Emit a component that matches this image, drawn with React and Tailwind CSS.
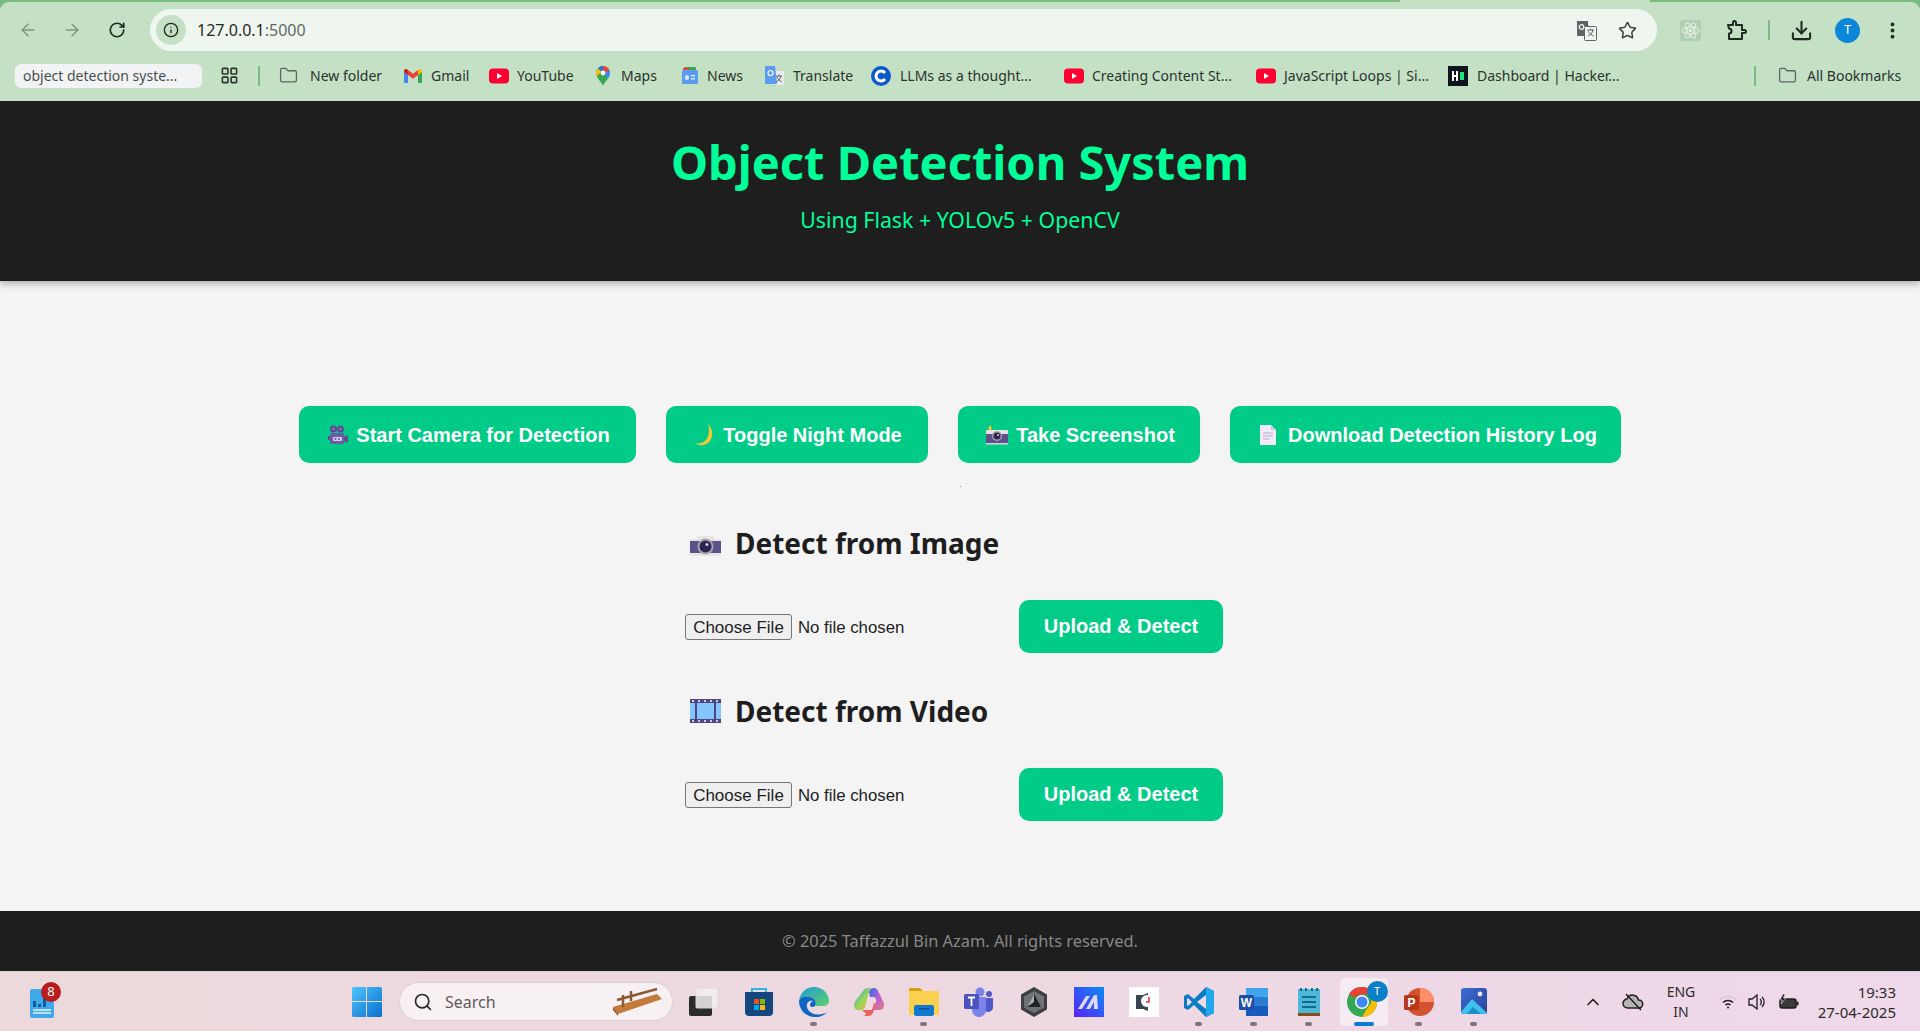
import React from 'react';
import { ArrowLeft, ArrowRight, RotateCw, Info, Star, Download, MoreVertical, ChevronUp, Search, Folder, LayoutGrid } from 'lucide-react';

/* ---------- bookmark favicons ---------- */
const YouTubeIcon = () => (
  <svg width="20" height="16" viewBox="0 0 20 16">
    <rect width="20" height="15" y="0.5" rx="4" fill="#ff0033" />
    <path d="M8 5l5 3-5 3z" fill="#fff" />
  </svg>
);

const GmailIcon = () => (
  <svg width="18" height="16" viewBox="0 0 18 16">
    <path d="M0 3v11a1 1 0 0 0 1 1h3V6.500z" fill="#4285f4" />
    <path d="M18 3v11a1 1 0 0 1-1 1h-3V6.500z" fill="#34a853" />
    <path d="M14 2v5l4-3V3c0-1.800-2-2.500-3-1.500z" fill="#fbbc04" />
    <path d="M4 7V2l5 3.800L14 2v5l-5 3.800z" fill="#ea4335" />
    <path d="M0 3v1l4 3V2L3 1.500C2 .5 0 1.200 0 3z" fill="#c5221f" />
  </svg>
);

const MapsIcon = () => (
  <svg width="14" height="20" viewBox="0 0 14 20">
    <path d="M7 20C6 16 0 12 0 7a7 7 0 0 1 14 0c0 5-6 9-7 13z" fill="#34a853" />
    <path d="M2 2.200A7 7 0 0 1 7 0v4.500A2.500 2.500 0 0 0 5 5.500z" fill="#1a73e8" />
    <path d="M7 0a7 7 0 0 1 6.500 4.500L9 6.500A2.500 2.500 0 0 0 7 4.500z" fill="#ea4335" />
    <path d="M0 7a7 7 0 0 1 2-4.800l3.200 3.500L1 10.500A7 7 0 0 1 0 7z" fill="#fbbc04" />
    <path d="M13.500 4.500A7 7 0 0 1 14 7c0 2-1 3.800-2.500 6L9 6.500z" fill="#4285f4" />
    <circle cx="7" cy="7" r="2.400" fill="#fff" />
  </svg>
);

const NewsIcon = () => (
  <svg width="16" height="18" viewBox="0 0 16 18">
    <rect x="2" y="0" width="12" height="6" rx="1" fill="#34a853" />
    <rect x="1" y="1" width="6" height="5" fill="#ea4335" />
    <rect x="0" y="3" width="16" height="14" rx="1.500" fill="#5c9cf0" />
    <rect x="3" y="8" width="4" height="5" rx="2" fill="#d6e6fb" />
    <rect x="9" y="8" width="4" height="1.500" fill="#d6e6fb" />
    <rect x="9" y="11" width="4" height="1.500" fill="#d6e6fb" />
  </svg>
);

const TranslateIcon = () => (
  <svg width="19" height="20" viewBox="0 0 19 20">
    <rect x="7" y="5" width="12" height="14" rx="1" fill="#e8eaed" />
    <path d="M10 19l-1 1-1-1z" fill="#4285f4" />
    <path d="M1 0h9l2 18H1a1 1 0 0 1-1-1V1a1 1 0 0 1 1-1z" fill="#5c9cf0" />
    <circle cx="5.500" cy="7" r="2.500" fill="none" stroke="#fff" strokeWidth="1.200" />
    <path d="M11 10h6M14 8.500v1.500M16 10c-.5 3-3 5-5 6M12 11c1 2.500 3 4 5 5" stroke="#5f6368" strokeWidth="1" fill="none" />
  </svg>
);

const CircleCIcon = () => (
  <svg width="20" height="20" viewBox="0 0 20 20">
    <circle cx="10" cy="10" r="10" fill="#0a58ca" />
    <path d="M14 7a5 5 0 1 0 0 6" fill="none" stroke="#fff" strokeWidth="3" />
  </svg>
);

const HackerIcon = () => (
  <svg width="20" height="20" viewBox="0 0 20 20">
    <rect width="20" height="20" fill="#0e141e" />
    <path d="M4 5h2v4h2V5h2v10H8v-4H6v4H4z" fill="#fff" />
    <rect x="12" y="6" width="4" height="8" fill="#1ce57a" />
  </svg>
);

const bookmarks = [
  { label: 'New folder', width: 'w-[125px]', icon: <Folder size={19} strokeWidth={1.6} color="#5f6368" />, gap: 'gap-[12px]' },
  { label: 'Gmail', width: 'w-[85px]', icon: <GmailIcon />, gap: 'gap-[9px]' },
  { label: 'YouTube', width: 'w-[107px]', icon: <YouTubeIcon />, gap: 'gap-[8px]' },
  { label: 'Maps', width: 'w-[86px]', icon: <MapsIcon />, gap: 'gap-[11px]' },
  { label: 'News', width: 'w-[83px]', icon: <NewsIcon />, gap: 'gap-[9px]' },
  { label: 'Translate', width: 'w-[106px]', icon: <TranslateIcon />, gap: 'gap-[9px]' },
  { label: 'LLMs as a thought...', width: 'w-[193px]', icon: <CircleCIcon />, gap: 'gap-[9px]' },
  { label: 'Creating Content St...', width: 'w-[192px]', icon: <YouTubeIcon />, gap: 'gap-[8px]' },
  { label: 'JavaScript Loops | Si...', width: 'w-[192px]', icon: <YouTubeIcon />, gap: 'gap-[8px]' },
  { label: 'Dashboard | Hacker...', width: 'w-[306px]', icon: <HackerIcon />, gap: 'gap-[9px]' },
];

/* ---------- chrome toolbar ---------- */
const BrowserChrome = () => (
  <div className="bg-[#7bbd80] shrink-0 relative z-20">
    <div className="flex h-[2px]">
      <div className="flex-1" />
      <div className="w-[250px] bg-[#c5e1c5]" />
      <div className="w-[270px]" />
    </div>
    <div className="bg-[#c5e1c5] rounded-t-[9px] h-[99px] flex flex-col">
      <div className="flex items-center h-[56px]">
        <div className="w-[150px] flex items-center shrink-0 pl-[18px] gap-[24px]">
          <ArrowLeft size={20} strokeWidth={1.8} color="#7f9484" />
          <ArrowRight size={20} strokeWidth={1.8} color="#7f9484" />
          <RotateCw size={18} strokeWidth={2.2} color="#1f2a22" className="ml-[2px]" />
        </div>
        <div className="w-[1507px] h-[42px] rounded-full bg-[#eff6ef] flex items-center pl-[6px] pr-[20px]">
          <div className="w-[30px] h-[30px] rounded-full bg-[#c5e1c5] flex items-center justify-center">
            <Info size={16} strokeWidth={2} color="#1f2a22" />
          </div>
          <span className="ml-[11px] text-[16px] text-[#1f2a22]">127.0.0.1<span className="text-[#5f6b62]">:5000</span></span>
          <div className="ml-auto flex items-center gap-[21px]">
            <svg width="21" height="21" viewBox="0 0 21 21">
              <path d="M1 1h11l1 15H2a1 1 0 0 1-1-1z" fill="#5f6368" />
              <rect x="8.500" y="6.500" width="12" height="14" rx="1" fill="#eff6ef" stroke="#5f6368" />
              <path d="M11 10h7M14.500 8.500V10M17 10c-.5 3-3 5-5 6M12.500 11.500c1 2 3 3.500 5 4.500" stroke="#5f6368" fill="none" />
              <circle cx="5.500" cy="7" r="2.300" fill="none" stroke="#eff6ef" strokeWidth="1.300" />
            </svg>
            <Star size={19} strokeWidth={1.9} color="#3c4043" />
          </div>
        </div>
        <div className="flex items-center flex-1 pl-[23px]">
          <svg width="21" height="21" viewBox="0 0 21 21">
            <rect width="21" height="21" rx="2" fill="#b0ceb2" />
            <g fill="none" stroke="#e3efe3" strokeWidth="1.100">
              <ellipse cx="10.500" cy="10.500" rx="8.500" ry="3.400" />
              <ellipse cx="10.500" cy="10.500" rx="8.500" ry="3.400" transform="rotate(60 10.500 10.500)" />
              <ellipse cx="10.500" cy="10.500" rx="8.500" ry="3.400" transform="rotate(120 10.500 10.500)" />
            </g>
            <circle cx="10.500" cy="10.500" r="1.800" fill="#e3efe3" />
          </svg>
          <svg width="22" height="20" viewBox="0 0 22 20" className="ml-[25px]" fill="none" stroke="#1f2a22" strokeWidth="2" strokeLinejoin="round">
            <path d="M2 5h5V2.500a1.500 1.500 0 0 1 3 0V5h6v5h2.500a1.500 1.500 0 0 1 0 3H16v6H3v-5.500a2.500 2.500 0 0 0 0-5z" fill="none" />
          </svg>
          <div className="w-[2px] h-[20px] bg-[#7bbd80] ml-[20px]" />
          <Download size={23} strokeWidth={2.2} color="#1f2a22" className="ml-[20px]" />
          <div className="w-[25px] h-[25px] rounded-full bg-[#0b86d9] text-white text-[13px] flex items-center justify-center ml-[22px]">T</div>
          <MoreVertical size={21} strokeWidth={2.4} color="#1f2a22" className="ml-[22px]" />
        </div>
      </div>
      <div className="flex items-center h-[43px] text-[14px] text-[#2b332d] pb-[8px]">
        <div className="ml-[15px] w-[187px] h-[24px] rounded-[6px] bg-[#f1f3f4] text-[#4a4f4c] flex items-center pl-[8px]">object detection syste...</div>
        <LayoutGrid size={19} strokeWidth={2} color="#2b332d" className="ml-[18px] shrink-0" />
        <div className="w-[2px] h-[20px] bg-[#7bbd80] ml-[19px] mr-[19px] shrink-0" />
        {bookmarks.map((b) => (
          <div key={b.label} className={`flex items-center shrink-0 whitespace-nowrap ${b.width} ${b.gap}`}>
            {b.icon}
            <span>{b.label}</span>
          </div>
        ))}
        <div className="w-[2px] h-[20px] bg-[#7bbd80] shrink-0" />
        <Folder size={19} strokeWidth={1.6} color="#5f6368" className="ml-[22px] shrink-0" />
        <span className="ml-[10px] whitespace-nowrap">All Bookmarks</span>
      </div>
    </div>
  </div>
);

/* ---------- emoji drawings ---------- */
const MovieCamera = () => (
  <svg width="20" height="20" viewBox="0 0 20 20">
    <circle cx="5.500" cy="4" r="3.500" fill="#5d4f92" />
    <circle cx="12.500" cy="4" r="3.500" fill="#5d4f92" />
    <circle cx="5.500" cy="4" r="1" fill="#9b8fcb" />
    <circle cx="12.500" cy="4" r="1" fill="#9b8fcb" />
    <rect x="2" y="8" width="14" height="11" rx="1" fill="#6b5ca8" />
    <path d="M16 12l4-2v8l-4-2z" fill="#5d4f92" />
    <rect x="0" y="11" width="2" height="4" fill="#5d4f92" />
    <rect x="5" y="12" width="9" height="4" rx="1" fill="#d5cfe8" />
    <circle cx="7.500" cy="14" r="1" fill="#5d4f92" />
    <circle cx="11" cy="14" r="1" fill="#5d4f92" />
  </svg>
);

const Moon = () => (
  <svg width="20" height="22" viewBox="0 0 20 22">
    <path d="M13 0c5 5 6 13 1 18-4 4-10 4-14 1 4 1 8 0 11-3 3-4 4-10 2-16z" fill="#f5c935" />
  </svg>
);

const CameraFlash = () => (
  <svg width="22" height="20" viewBox="0 0 22 20">
    <path d="M4 0l2 3-2 3-2-3z" fill="#f6c333" />
    <rect x="0" y="5" width="22" height="5" rx="1" fill="#e6e1e6" />
    <rect x="0" y="9" width="22" height="9" fill="#5d5189" />
    <rect x="0" y="18" width="22" height="1.500" fill="#d8d4dc" />
    <circle cx="11" cy="11" r="5" fill="#a8a4ac" />
    <circle cx="11" cy="11" r="3.600" fill="#2e2550" />
    <circle cx="12" cy="10" r="1" fill="#d6cff0" />
  </svg>
);

const PageIcon = () => (
  <svg width="16" height="20" viewBox="0 0 16 20" className="ml-[3px] mr-[4px]">
    <path d="M0 0h11l5 5v15H0z" fill="#f0ebf6" />
    <path d="M11 0l5 5h-5z" fill="#cfc7e0" />
    <path d="M3 8h10M3 11h10M3 14h7" stroke="#b5abc9" strokeWidth="1.200" />
  </svg>
);

const CameraEmoji = () => (
  <svg width="31" height="22" viewBox="0 0 31 22" className="mt-[6px]">
    <path d="M0 5a1 1 0 0 1 1-1h6V1h17v3h6a1 1 0 0 1 1 1v16H0z" fill="#e8e4e8" />
    <rect y="6" width="31" height="12" fill="#5d5189" />
    <circle cx="15.500" cy="11.500" r="8" fill="#a8a4ac" />
    <circle cx="15.500" cy="11.500" r="6" fill="#2e2550" />
    <circle cx="17" cy="9.500" r="1.500" fill="#d6cff0" />
  </svg>
);

const FilmEmoji = () => (
  <svg width="31" height="24" viewBox="0 0 31 24">
    <rect width="31" height="24" fill="#4e467e" />
    <g fill="#cfc9e6">
      <rect x="2" y="1" width="2" height="2" /><rect x="8" y="1" width="2" height="2" /><rect x="14" y="1" width="2" height="2" /><rect x="20" y="1" width="2" height="2" /><rect x="26" y="1" width="2" height="2" />
      <rect x="2" y="21" width="2" height="2" /><rect x="8" y="21" width="2" height="2" /><rect x="14" y="21" width="2" height="2" /><rect x="20" y="21" width="2" height="2" /><rect x="26" y="21" width="2" height="2" />
    </g>
    <rect x="0" y="4" width="31" height="16" fill="#84c5fd" />
    <rect x="5" y="4" width="2" height="16" fill="#4e467e" />
    <rect x="24" y="4" width="2" height="16" fill="#4e467e" />
  </svg>
);

const ActionButton = ({ icon, width, children }) => (
  <button className={`${width} h-[57px] rounded-[10px] bg-[#00cc88] text-white font-bold text-[20px] font-['Liberation_Sans',sans-serif] flex items-center justify-center gap-[8px] pl-[3px] pt-[1px] whitespace-nowrap`}>
    {icon}
    {children}
  </button>
);

const UploadSection = ({ icon, title }) => (
  <section>
    <h2 className="flex items-center h-[40px] pl-[5px] gap-[14px] text-[28px] font-bold text-[#1e1e1e] font-['Noto_Sans',sans-serif] leading-none">
      {icon}
      <span>{title}</span>
    </h2>
    <form className="flex items-center mt-[37px] h-[53px] font-['Liberation_Sans',sans-serif]">
      <input
        type="file"
        className="w-[334px] mt-[2px] text-[16.800px] text-[#1e1e1e] file:h-[26px] file:w-[107px] file:mr-[6px] file:border file:border-[#767676] file:bg-[#efefef] file:rounded-[3px] file:text-[17px]"
      />
      <button type="button" className="w-[204px] h-[53px] rounded-[10px] bg-[#00cc88] text-white font-bold text-[20px] pb-[2px]">Upload &amp; Detect</button>
    </form>
  </section>
);

/* ---------- windows taskbar icons ---------- */
const TaskView = () => (
  <svg width="30" height="30" viewBox="0 0 30 30">
    <rect x="0" y="9" width="23" height="20" rx="2" fill="#2b2b2b" />
    <rect x="7" y="1" width="22" height="20" rx="1" fill="#f3eef0" fillOpacity="0.85" stroke="#e0d8dc" />
  </svg>
);

const StoreIcon = () => (
  <svg width="30" height="30" viewBox="0 0 30 30">
    <path d="M8 5V2h14v3" fill="none" stroke="#2fb6d8" strokeWidth="2" />
    <path d="M1 5h28v20a4 4 0 0 1-4 4H5a4 4 0 0 1-4-4z" fill="#14477e" />
    <rect x="10" y="12" width="5" height="5" fill="#f25022" />
    <rect x="16" y="12" width="5" height="5" fill="#7fba00" />
    <rect x="10" y="18" width="5" height="5" fill="#00a4ef" />
    <rect x="16" y="18" width="5" height="5" fill="#ffb900" />
  </svg>
);

const EdgeIcon = () => (
  <svg width="30" height="30" viewBox="0 0 30 30">
    <defs>
      <linearGradient id="edgeTop" x1="0" y1="0" x2="1" y2="1">
        <stop offset="0" stopColor="#1f9ad6" />
        <stop offset="1" stopColor="#5ed36a" />
      </linearGradient>
    </defs>
    <path d="M0 14C1 6 7 0 15 0c8 0 15 6 15 14 0 3-2 5-6 5h-8c2-3 0-8-5-9-5-1-10 0-11 4z" fill="url(#edgeTop)" />
    <path d="M0 14c1-4 6-5 11-4 5 1 7 6 5 9-2 2-5 1-5-1 0-2 1-3 3-4-4-1-7 2-6 6 1 5 7 9 15 7 2 0 5-1 6-3-3 4-7 6-13 6C7 30 0 23 0 14z" fill="#0c66c2" />
  </svg>
);

const CopilotIcon = () => (
  <svg width="30" height="30" viewBox="0 0 30 30">
    <defs>
      <linearGradient id="copA" x1="0" y1="0" x2="1" y2="1">
        <stop offset="0" stopColor="#1fa8e8" />
        <stop offset="0.5" stopColor="#9ad45a" />
        <stop offset="1" stopColor="#f5b13c" />
      </linearGradient>
      <linearGradient id="copB" x1="0" y1="0" x2="1" y2="1">
        <stop offset="0" stopColor="#2b6ee0" />
        <stop offset="0.5" stopColor="#b05fd8" />
        <stop offset="1" stopColor="#f07a7a" />
      </linearGradient>
    </defs>
    <path d="M9 4c1-2 3-3 5-3h5c-2 0-3 2-4 4l-4 15c-1 2-2 3-4 3H4c-3 0-4-2-4-5 0-2 1-4 2-5z" fill="url(#copA)" />
    <path d="M15 5c1-3 3-4 5-4 2 0 3 1 4 3l5 10c1 2 1 3 1 5 0 2-2 4-5 4h-5l2-8c1-3-1-5-3-5h-3z" fill="url(#copB)" />
    <path d="M8 23h10l2-7h2l-3 10c-1 2-3 3-5 3h-5c2 0 3-2 3-3l-2-1z" fill="#f0605a" />
  </svg>
);

const ExplorerIcon = () => (
  <svg width="30" height="30" viewBox="0 0 30 30">
    <path d="M0 2a1 1 0 0 1 1-1h10l3 3h16v4H0z" fill="#d9a013" />
    <rect x="0" y="4" width="30" height="24" fill="#fbd04f" />
    <rect x="5" y="18" width="20" height="11" rx="2" fill="#0f78d0" />
    <rect x="10" y="21" width="10" height="1.500" fill="#0b4f90" />
  </svg>
);

const TeamsIcon = () => (
  <svg width="30" height="30" viewBox="0 0 30 30">
    <circle cx="16" cy="5" r="4.500" fill="#7b83eb" />
    <circle cx="25" cy="7" r="3" fill="#5059c9" />
    <path d="M20 11h9v9a5 5 0 0 1-9 3z" fill="#5059c9" />
    <path d="M8 10h14v13a6 6 0 0 1-14 0z" fill="#7b83eb" />
    <rect x="0" y="7" width="15" height="15" rx="1.500" fill="#4b53bc" />
    <path d="M4 10.500h7M7.500 10.500V19" stroke="#fff" strokeWidth="1.800" />
  </svg>
);

const HexIcon = () => (
  <svg width="28" height="30" viewBox="0 0 28 30">
    <path d="M14 0l13 7.500v15L14 30 1 22.500v-15z" fill="#3c3f44" />
    <path d="M14 4l10 5.500v11L14 26 4 20.500v-11z" fill="#6f7378" />
    <path d="M14 7l7 13H7z" fill="#1f2125" />
    <path d="M14 7l-7 13 7-5z" fill="#a9adb2" />
  </svg>
);

const MIcon = () => (
  <svg width="30" height="30" viewBox="0 0 30 30">
    <defs>
      <linearGradient id="mGrad" x1="0" y1="1" x2="1" y2="0">
        <stop offset="0" stopColor="#5a22f5" />
        <stop offset="1" stopColor="#0a8cf5" />
      </linearGradient>
    </defs>
    <rect width="30" height="30" fill="url(#mGrad)" />
    <path d="M4 22L12 9h4L8 22zM12 22l8-14h3l1 14h-4v-7l-4 7z" fill="#dcd8ff" />
  </svg>
);

const ClockIcon = () => (
  <svg width="30" height="30" viewBox="0 0 30 30">
    <rect width="30" height="30" fill="#fff" />
    <path d="M7 8h7l5-2v18l-5-2H7z" fill="#3b4552" />
    <circle cx="18" cy="14" r="6" fill="#fff" />
    <path d="M20 10v5h-3" stroke="#d6303a" strokeWidth="1.500" fill="none" />
  </svg>
);

const VSCodeIcon = () => (
  <svg width="30" height="30" viewBox="0 0 30 30">
    <path d="M22 0l8 4v22l-8 4-12-12-6 5-4-2v-12l4-2 6 5z" fill="#0a7bc4" />
    <path d="M22 0l8 4v22l-8 4z" fill="#22a6ee" />
    <path d="M22 8v14l-9-7z" fill="#eed9e6" />
    <path d="M4 11l4 4-4 4-1-1v-6z" fill="#eed9e6" />
  </svg>
);

const WordIcon = () => (
  <svg width="30" height="30" viewBox="0 0 30 30">
    <rect x="7" y="1" width="22" height="9" fill="#41a5ee" />
    <rect x="7" y="10" width="22" height="9" fill="#2b7cd3" />
    <rect x="7" y="19" width="22" height="10" fill="#185abd" />
    <rect x="0" y="8" width="15" height="15" rx="1.500" fill="#1e4fa8" />
    <text x="7.500" y="20" textAnchor="middle" fontSize="12" fontWeight="700" fill="#fff" fontFamily="Liberation Sans, sans-serif">W</text>
  </svg>
);

const NotepadIcon = () => (
  <svg width="22" height="30" viewBox="0 0 22 30">
    <rect x="0" y="2" width="22" height="24" fill="#4cb8d8" />
    <rect x="0" y="26" width="22" height="3" fill="#8a4a1c" />
    <path d="M3 1v3M8 1v3M14 1v3M19 1v3" stroke="#136d8e" strokeWidth="2" />
    <path d="M4 10h14M4 15h14M4 20h14" stroke="#0f6c8c" strokeWidth="2" />
  </svg>
);

const ChromeIcon = () => (
  <div className="relative w-[48px] h-[48px] rounded-[5px] bg-[#f6eaf3] flex items-center justify-center">
    <svg width="30" height="30" viewBox="0 0 30 30" className="mt-[1px] ml-[-3px]">
      <circle cx="15" cy="15" r="15" fill="#34a853" />
      <path d="M15 0a15 15 0 0 1 13 7.500H15A7.500 7.500 0 0 0 8 11L2 7A15 15 0 0 1 15 0z" fill="#ea4335" />
      <path d="M28 7.500A15 15 0 0 1 15 30l6-10a7.500 7.500 0 0 0 0-12.500z" fill="#fbbc04" />
      <circle cx="15" cy="15" r="7" fill="#fff" />
      <circle cx="15" cy="15" r="5.500" fill="#4285f4" />
    </svg>
    <div className="absolute top-[3px] right-[0px] w-[21px] h-[21px] rounded-full bg-[#0b7fc7] text-white text-[11px] flex items-center justify-center">T</div>
    <div className="absolute bottom-[0px] left-[14px] w-[20px] h-[4px] rounded-full bg-[#0a7bd4]" />
  </div>
);

const PowerPointIcon = () => (
  <svg width="30" height="30" viewBox="0 0 30 30">
    <circle cx="16" cy="15" r="14" fill="#d35230" />
    <path d="M16 1a14 14 0 0 1 14 14H16z" fill="#ff8f6b" />
    <rect x="0" y="8" width="15" height="15" rx="1.500" fill="#b7381b" />
    <text x="7.500" y="20" textAnchor="middle" fontSize="12" fontWeight="700" fill="#fff" fontFamily="Liberation Sans, sans-serif">P</text>
  </svg>
);

const PhotosIcon = () => (
  <svg width="26" height="28" viewBox="0 0 26 28">
    <defs>
      <linearGradient id="photoSky" x1="0" y1="0" x2="1" y2="1">
        <stop offset="0" stopColor="#3c6fd0" />
        <stop offset="1" stopColor="#2a3f9e" />
      </linearGradient>
    </defs>
    <rect width="26" height="26" rx="3" fill="url(#photoSky)" />
    <circle cx="19" cy="6" r="2.400" fill="#e8e4f6" />
    <path d="M0 24l11-13 15 14v1H2z" fill="#3cc2ec" />
    <path d="M6 26l6-7 8 7z" fill="#1e8cc8" />
  </svg>
);

const taskIcons = [
  { id: 'view', icon: <TaskView /> },
  { id: 'store', icon: <StoreIcon /> },
  { id: 'edge', icon: <EdgeIcon />, running: true },
  { id: 'copilot', icon: <CopilotIcon /> },
  { id: 'explorer', icon: <ExplorerIcon />, running: true },
  { id: 'teams', icon: <TeamsIcon /> },
  { id: 'hex', icon: <HexIcon /> },
  { id: 'm', icon: <MIcon /> },
  { id: 'clock', icon: <ClockIcon /> },
  { id: 'vscode', icon: <VSCodeIcon />, running: true },
  { id: 'word', icon: <WordIcon />, running: true },
  { id: 'notepad', icon: <NotepadIcon />, running: true },
  { id: 'chrome', icon: <ChromeIcon /> },
  { id: 'ppt', icon: <PowerPointIcon />, running: true },
  { id: 'photos', icon: <PhotosIcon />, running: true },
];

const Taskbar = () => (
  <div className="h-[60px] shrink-0 flex items-center border-t border-[#d8cdd2] bg-linear-to-r from-[#ecd9db] to-[#efd8e9] relative">
    <div className="relative ml-[30px] w-[24px] h-[29px] mt-[4px]">
      <svg width="24" height="29" viewBox="0 0 24 29">
        <rect width="24" height="29" rx="2" fill="#3fa9ec" />
        <path d="M3 18V12h3v6zM8 18v-3h3v3zM13 18V9h3v9z" fill="#0f5d9e" />
        <path d="M3 21h18M3 24h18" stroke="#e6f3fb" strokeWidth="1.500" />
      </svg>
      <div className="absolute top-[-7px] right-[-7px] w-[20px] h-[20px] rounded-full bg-[#b91c1c] text-white text-[13px] flex items-center justify-center">8</div>
    </div>
    <svg width="30" height="30" viewBox="0 0 30 30" className="ml-[298px]">
      <defs>
        <linearGradient id="winGrad" x1="0" y1="0" x2="1" y2="1">
          <stop offset="0" stopColor="#4fc3fa" />
          <stop offset="1" stopColor="#0a70cf" />
        </linearGradient>
      </defs>
      <rect width="30" height="30" rx="1.500" fill="url(#winGrad)" />
      <path d="M14.500 0v30M0 14.500h30" stroke="#ecdbe0" strokeWidth="1" />
    </svg>
    <div className="ml-[17px] w-[274px] h-[39px] rounded-full bg-[#f8f1f3] border border-[#dccfd4] flex items-center pl-[13px] text-[16px] text-[#5f5a5c] shrink-0">
      <Search size={20} strokeWidth={2} color="#2b2b2b" />
      <span className="ml-[12px]">Search</span>
      <svg width="52" height="30" viewBox="0 0 52 30" className="ml-auto mr-[9px]">
        <path d="M2 20l44-13 5 5-44 15z" fill="#c47a3a" />
        <path d="M2 20l5 7v2l-5-6z" fill="#8f4f20" />
        <path d="M6 13l40-11M12 8v12M20 4v10" stroke="#8a5b33" strokeWidth="2.500" fill="none" />
      </svg>
    </div>
    <div className="flex ml-[3px]">
      {taskIcons.map((t) => (
        <div key={t.id} className="relative w-[55px] h-[59px] flex items-center justify-center">
          {t.icon}
          {t.running && <div className="absolute bottom-[5px] left-[24px] w-[7px] h-[4px] rounded-full bg-[#80757b]" />}
        </div>
      ))}
    </div>
    <ChevronUp size={20} strokeWidth={2} color="#1f1f1f" className="ml-[82px]" />
    <svg width="22" height="20" viewBox="0 0 22 20" className="ml-[19px]">
      <path d="M6 16a4.500 4.500 0 0 1-1-9 6 6 0 0 1 11.500 1A4 4 0 0 1 17 16z" fill="#b8b4b6" stroke="#1f1f1f" strokeWidth="1.500" />
      <path d="M4 2l15 16" stroke="#1f1f1f" strokeWidth="1.500" />
    </svg>
    <div className="w-[34px] ml-[20px] text-center text-[14px] leading-[20px] text-[#2b2b2b]">ENG<br />IN</div>
    <svg width="20" height="16" viewBox="0 0 20 16" className="ml-[20px]" fill="none" stroke="#1f1f1f" strokeWidth="1.500">
      <path d="M2 6a11 11 0 0 1 16 0" stroke="#d4c8cf" />
      <path d="M5 8.500a7 7 0 0 1 10 0" />
      <path d="M7.500 11a3.500 3.500 0 0 1 5 0" />
      <circle cx="10" cy="13.500" r="1" fill="#1f1f1f" stroke="none" />
    </svg>
    <svg width="20" height="18" viewBox="0 0 20 18" className="ml-[10px]" fill="none" stroke="#1f1f1f" strokeWidth="1.300">
      <path d="M1 6h3l5-4v14l-5-4H1z" />
      <path d="M12 6a4 4 0 0 1 0 6M14 4a7 7 0 0 1 0 10" />
    </svg>
    <svg width="21" height="16" viewBox="0 0 21 16" className="ml-[10px]">
      <rect x="2" y="5" width="16" height="9" rx="2" fill="#3a3a3a" stroke="#1f1f1f" strokeWidth="1.500" />
      <rect x="18.500" y="7.500" width="2" height="4" rx="1" fill="#1f1f1f" />
      <path d="M5 0L2 6h2.500L3 10l5-6H5.500L7 0z" fill="#1f1f1f" stroke="#efd8e9" strokeWidth="0.600" />
    </svg>
    <div className="ml-auto mr-[24px] text-right text-[15px] leading-[20px] text-[#2b2b2b]">19:33<br />27-04-2025</div>
  </div>
);

export default function App() {
  return (
    <div className="h-screen flex flex-col overflow-hidden bg-[#f4f4f4] font-['Noto_Sans',sans-serif]">
      <BrowserChrome />

      <header className="h-[180px] shrink-0 bg-[#1e1e1e] text-[#00ff99] text-center shadow-[0_2px_8px_rgba(0,0,0,0.35)] relative z-10 pt-[29px]">
        <h1 className="text-[47px] font-bold leading-[66px] mt-[-1px]">Object Detection System</h1>
        <p className="text-[21.300px] leading-[28px] mt-[11px]">Using Flask + YOLOv5 + OpenCV</p>
      </header>

      <main className="flex-1 pt-[125px]">
        <div className="flex justify-center gap-[30px]">
          <ActionButton width="w-[337px]" icon={<MovieCamera />}>Start Camera for Detection</ActionButton>
          <ActionButton width="w-[262px]" icon={<Moon />}>Toggle Night Mode</ActionButton>
          <ActionButton width="w-[242px]" icon={<CameraFlash />}>Take Screenshot</ActionButton>
          <ActionButton width="w-[391px]" icon={<PageIcon />}>Download Detection History Log</ActionButton>
        </div>
        <div className="mx-auto mt-[23px] w-[1px] h-[1px] bg-[#999999]" />
        <div className="w-[550px] mx-auto mt-[36px] flex flex-col gap-[38px]">
          <UploadSection icon={<CameraEmoji />} title="Detect from Image" />
          <UploadSection icon={<FilmEmoji />} title="Detect from Video" />
        </div>
      </main>

      <footer className="h-[60px] shrink-0 bg-[#1e1e1e] text-[#888888] text-[16.400px] flex items-center justify-center pt-[1px]">
        © 2025 Taffazzul Bin Azam. All rights reserved.
      </footer>

      <Taskbar />
    </div>
  );
}
